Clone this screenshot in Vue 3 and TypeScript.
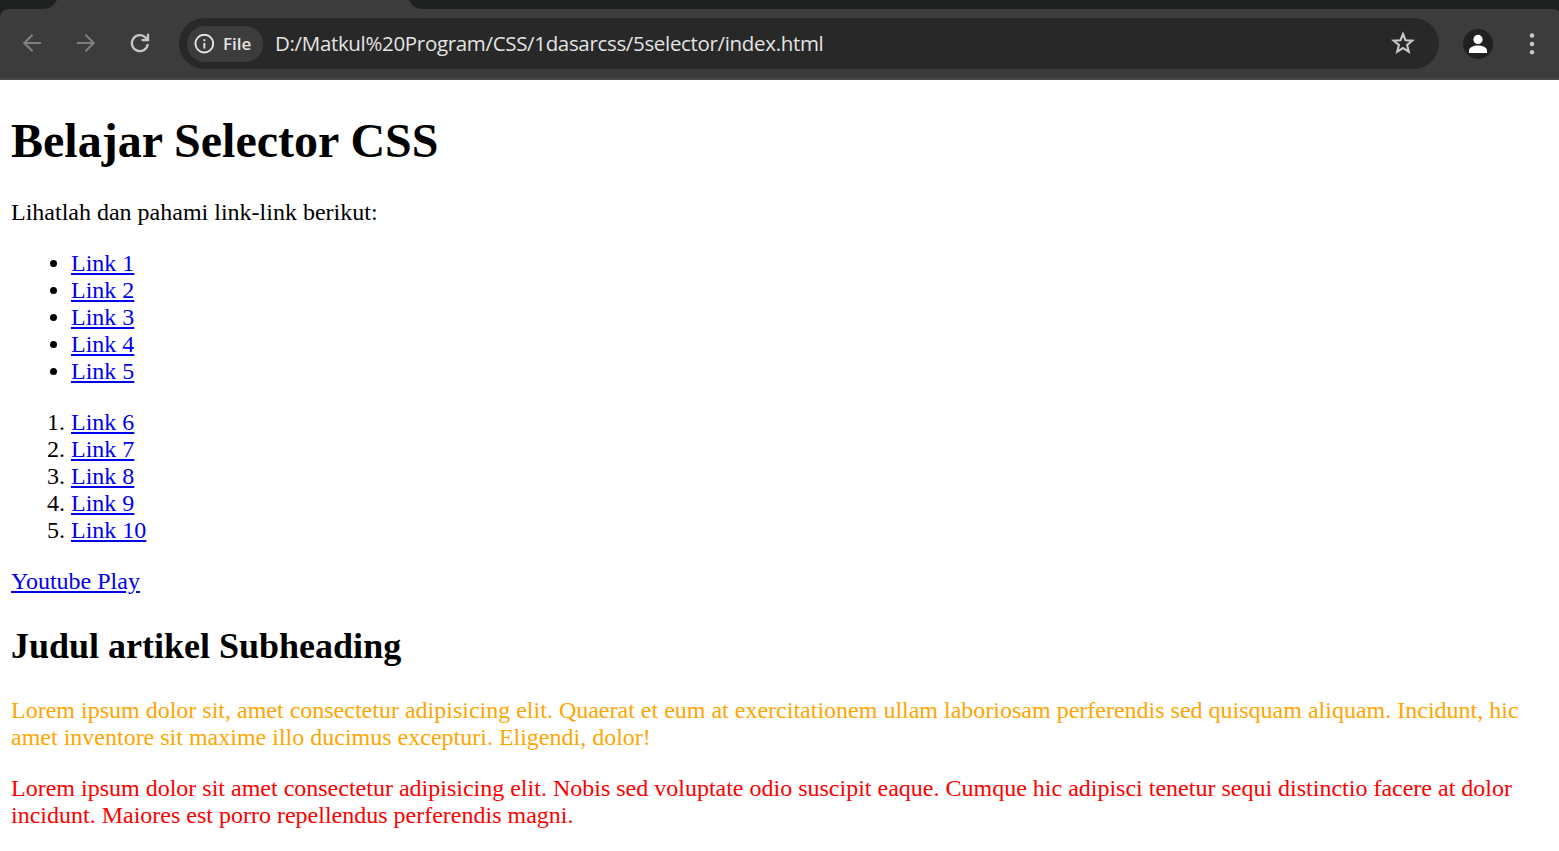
<script setup lang="ts">
const bulletLinks: string[] = ['Link 1', 'Link 2', 'Link 3', 'Link 4', 'Link 5']
const numberedLinks: string[] = ['Link 6', 'Link 7', 'Link 8', 'Link 9', 'Link 10']
const address = 'D:/Matkul%20Program/CSS/1dasarcss/5selector/index.html'
</script>

<template>
  <div class="window">
    <svg class="tabstrip" width="1559" height="16" viewBox="0 0 1559 16" aria-hidden="true">
      <path d="M0 0H57C54 6 50 9 43 9H10Q2 9 0 16Z" />
      <path d="M409 0H1559V11Q1557 9 1553 9H423C416 9 412 6 409 0Z" />
    </svg>
    <header class="toolbar">
      <svg class="icon back" width="20" height="20" viewBox="0 0 20 20">
        <path d="M19 10H2M10.5 1.8L2.3 10L10.5 18.2" />
      </svg>
      <svg class="icon forward" width="20" height="20" viewBox="0 0 20 20">
        <path d="M1 10H18M9.5 1.8L17.7 10L9.5 18.2" />
      </svg>
      <svg class="icon reload" width="20" height="20" viewBox="0 0 20 20">
        <path d="M17.8 11.2A8 8 0 1 1 15.6 4.6L17.7 6.9M18 .8V7.1H11.6" />
      </svg>
      <div class="omnibox">
        <div class="chip">
          <svg width="20" height="20" viewBox="0 0 20 20">
            <circle cx="10.3" cy="9.6" r="8.9" fill="none" stroke="#e3e3e3" stroke-width="1.9" />
            <path d="M9.4 9H11.3V14.5H9.4ZM9.4 5.3H11.3V7.2H9.4Z" fill="#e3e3e3" />
          </svg>
          <span class="chip-label">File</span>
        </div>
        <span class="address">{{ address }}</span>
        <svg class="star" width="24" height="24" viewBox="0 0 24 24">
          <path d="M12 3L14.5 9.2L21.3 9.7L16.1 14L17.8 20.7L12 17.1L6.2 20.7L7.9 14L2.7 9.7L9.5 9.2Z" />
        </svg>
      </div>
      <svg class="avatar" width="30" height="30" viewBox="0 0 30 30">
        <circle cx="15" cy="15" r="15" fill="#1f2120" />
        <circle cx="15" cy="10.4" r="4.6" fill="#fff" />
        <path d="M6 24V21.5C6 18 11 16.4 15 16.4S24 18 24 21.5V24Z" fill="#fff" />
      </svg>
      <svg class="menu" width="6" height="24" viewBox="0 0 6 24">
        <circle cx="3" cy="3.5" r="2.3" />
        <circle cx="3" cy="12" r="2.3" />
        <circle cx="3" cy="20.3" r="2.3" />
      </svg>
    </header>
    <main class="page">
      <h1>Belajar Selector CSS</h1>
      <p>Lihatlah dan pahami link-link berikut:</p>
      <ul>
        <li v-for="link in bulletLinks" :key="link"><a href="#">{{ link }}</a></li>
      </ul>
      <ol>
        <li v-for="link in numberedLinks" :key="link"><a href="#">{{ link }}</a></li>
      </ol>
      <a href="#">Youtube Play</a>
      <h2>Judul artikel Subheading</h2>
      <p class="orange">Lorem ipsum dolor sit, amet consectetur adipisicing elit. Quaerat et eum at exercitationem ullam laboriosam perferendis sed quisquam aliquam. Incidunt, hic<br>amet inventore sit maxime illo ducimus excepturi. Eligendi, dolor!</p>
      <p class="red">Lorem ipsum dolor sit amet consectetur adipisicing elit. Nobis sed voluptate odio suscipit eaque. Cumque hic adipisci tenetur sequi distinctio facere at dolor<br>incidunt. Maiores est porro repellendus perferendis magni.</p>
    </main>
  </div>
</template>

<style>
body {
  margin: 0;
  background: #fff;
}
</style>

<style scoped>
.window {
  width: 1559px;
  height: 851px;
  overflow: hidden;
  background: #fff;
}
.tabstrip {
  display: block;
  background: #3c3c3c;
  fill: #1f2120;
}
.toolbar {
  box-sizing: border-box;
  height: 64px;
  padding: 2px 0 0 22px;
  display: flex;
  align-items: flex-start;
  background: #3c3c3c;
  border-bottom: 2px solid #474747;
}
.icon {
  flex: none;
  margin-top: 15.4px;
  fill: none;
  stroke-width: 2.1;
}
.back {
  stroke: #7f7f7f;
}
.forward {
  margin-left: 34px;
  stroke: #7f7f7f;
}
.reload {
  margin-left: 34px;
  stroke: #c7c7c7;
  stroke-width: 2.3;
}
.omnibox {
  box-sizing: border-box;
  width: 1260px;
  height: 51px;
  margin-left: 29px;
  padding: 0 24px 0 8px;
  flex: none;
  display: flex;
  align-items: center;
  border-radius: 26px;
  background: #282828;
}
.chip {
  box-sizing: border-box;
  width: 76px;
  height: 36px;
  padding-left: 7px;
  flex: none;
  display: flex;
  align-items: center;
  border-radius: 18px;
  background: #3c3c3c;
}
.chip-label {
  margin-left: 9px;
  color: #e3e3e3;
  font: 600 17px/24px "Open Sans", sans-serif;
}
.address {
  margin-left: 12px;
  padding-bottom: 2px;
  color: #e3e3e3;
  font: 400 20.5px/28px "Open Sans", sans-serif;
  letter-spacing: -0.33px;
  white-space: nowrap;
}
.star {
  margin: 0 0 1px auto;
  fill: none;
  stroke: #c7c7c7;
  stroke-width: 2.1;
}
.avatar {
  margin: 11px 0 0 24px;
  flex: none;
}
.menu {
  margin: 13.5px 0 0 36px;
  flex: none;
  fill: #c7c7c7;
}
.page {
  padding: 0 11px;
  color: #000;
  font: 24px/27px "Liberation Serif", serif;
}
h1 {
  margin: 33px 0 31px;
  font-size: 48px;
  line-height: 55px;
}
h2 {
  margin: 30px 0;
  font-size: 36px;
  line-height: 42px;
}
p,
ul,
ol {
  margin: 0 0 24px;
}
ul,
ol {
  padding-left: 60px;
}
p {
  white-space: nowrap;
}
a {
  color: #0000ee;
  text-decoration: underline;
}
.orange {
  color: orange;
}
.red {
  color: red;
}
</style>
